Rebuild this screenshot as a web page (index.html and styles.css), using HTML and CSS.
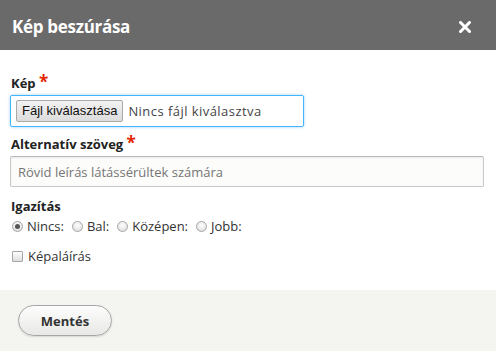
FILE: index.html
```html
<!DOCTYPE html>
<html lang="hu">
<head>
    <meta charset="UTF-8">
    <title>Kép beszúrása</title>
    <link rel="stylesheet" href="styles.css">
</head>
<body>
    <div class="dialog">
        <div class="dialog-title">
            <span class="title-text">Kép beszúrása</span>
            <button class="close-button" aria-label="Bezárás">
                <svg width="12" height="12" viewBox="0 0 12 12">
                    <path d="M1.5 1.5 L10.5 10.5 M10.5 1.5 L1.5 10.5" stroke="#fff" stroke-width="3" stroke-linecap="square"/>
                </svg>
            </button>
        </div>

        <div class="dialog-body">
            <div class="form-item file-item">
                <label class="form-label">Kép <span class="required">*</span></label>
                <div class="file-field">
                    <span class="file-button">Fájl kiválasztása</span>
                    <span class="file-status">Nincs fájl kiválasztva</span>
                </div>
            </div>

            <div class="form-item alt-item">
                <label class="form-label">Alternatív szöveg <span class="required">*</span></label>
                <input class="text-field" type="text" placeholder="Rövid leírás látássérültek számára">
            </div>

            <div class="form-item">
                <label class="form-label">Igazítás</label>
                <div class="radios">
                    <span class="radio checked"></span><span class="radio-label">Nincs:</span>
                    <span class="radio"></span><span class="radio-label">Bal:</span>
                    <span class="radio"></span><span class="radio-label">Középen:</span>
                    <span class="radio"></span><span class="radio-label">Jobb:</span>
                </div>
            </div>

            <div class="checkbox-row">
                <span class="checkbox"></span><span class="radio-label">Képaláírás</span>
            </div>
        </div>

        <div class="dialog-footer">
            <button class="save-button">Mentés</button>
        </div>
    </div>
</body>
</html>
```

FILE: styles.css
```css
* {
    margin: 0;
    padding: 0;
    box-sizing: border-box;
}

body {
    font-family: 'Open Sans', 'DejaVu Sans', sans-serif;
    color: #333;
    background: #fff;
    width: 496px;
    height: 351px;
    overflow: hidden;
}

.dialog {
    display: flex;
    flex-direction: column;
    height: 351px;
}

.dialog-title {
    height: 50px;
    background: #6a6a6a;
    display: flex;
    align-items: center;
    justify-content: space-between;
    padding: 3px 25px 0 12px;
}

.title-text {
    color: #fff;
    font-size: 17px;
    font-weight: bold;
    letter-spacing: -0.3px;
}

.close-button {
    background: none;
    border: none;
    width: 12px;
    height: 12px;
    display: flex;
}

.dialog-body {
    flex: 1;
    padding: 24px 12px 0 10px;
}

.form-item {
    margin-bottom: 11px;
}

.file-item {
    margin-bottom: 8px;
}

.alt-item {
    margin-bottom: 10px;
}

.form-label {
    display: block;
    font-size: 13px;
    font-weight: bold;
    color: #222;
    line-height: 18px;
    margin-bottom: 3px;
    padding-left: 1px;
}

.required {
    color: #e32700;
    font-size: 17px;
    line-height: 10px;
}

.file-field {
    width: 294px;
    height: 32px;
    border: 1px solid #40b6ff;
    box-shadow: 0 0 3px rgba(64, 160, 230, 0.5);
    border-radius: 2px;
    display: flex;
    align-items: center;
    padding-left: 5px;
    gap: 5px;
}

.file-button {
    font-family: 'Liberation Sans', Arial, sans-serif;
    font-size: 13px;
    color: #111;
    background: linear-gradient(#f2f2f2, #dcdcdc);
    border: 1px solid #a9a9a9;
    border-radius: 2px;
    height: 22px;
    line-height: 20px;
    padding: 0 5px;
}

.file-status {
    font-size: 13px;
    letter-spacing: 0.45px;
    color: #444;
}

.text-field {
    width: 474px;
    height: 31px;
    border: 1px solid #c8c8c8;
    border-top-color: #b8b8b8;
    border-radius: 2px;
    background: #fcfcfa;
    font-family: inherit;
    font-size: 13px;
    padding: 0 7px;
    box-shadow: inset 0 1px 2px rgba(0, 0, 0, 0.08);
}

.text-field::placeholder {
    color: #757575;
}

.radios {
    display: flex;
    align-items: center;
    height: 16px;
    padding-left: 2px;
}

.radio {
    width: 11px;
    height: 11px;
    border-radius: 50%;
    border: 1px solid #a5a5a5;
    background: radial-gradient(circle at 50% 35%, #fff, #d8d8d8);
    display: inline-block;
    position: relative;
    margin-right: 4px;
}

.radio.checked::after {
    content: '';
    position: absolute;
    left: 2px;
    top: 2px;
    width: 5px;
    height: 5px;
    border-radius: 50%;
    background: #555;
}

.radio-label {
    font-size: 13px;
    color: #333;
    margin-right: 8px;
}

.checkbox-row {
    display: flex;
    align-items: center;
    margin-top: 13px;
    padding-left: 2px;
}

.checkbox {
    width: 11px;
    height: 11px;
    border: 1px solid #a5a5a5;
    border-radius: 1px;
    background: linear-gradient(#fff, #dedede);
    margin-right: 5px;
}

.dialog-footer {
    height: 61px;
    background: #f4f4f1;
    padding: 15px 18px;
}

.save-button {
    width: 94px;
    height: 31px;
    border: 1px solid #a6a6a6;
    border-radius: 16px;
    background: linear-gradient(#fdfdfd, #e8e8e6);
    font-family: inherit;
    font-size: 13px;
    font-weight: bold;
    color: #333;
    box-shadow: 0 1px 2px rgba(0, 0, 0, 0.12);
}
```
